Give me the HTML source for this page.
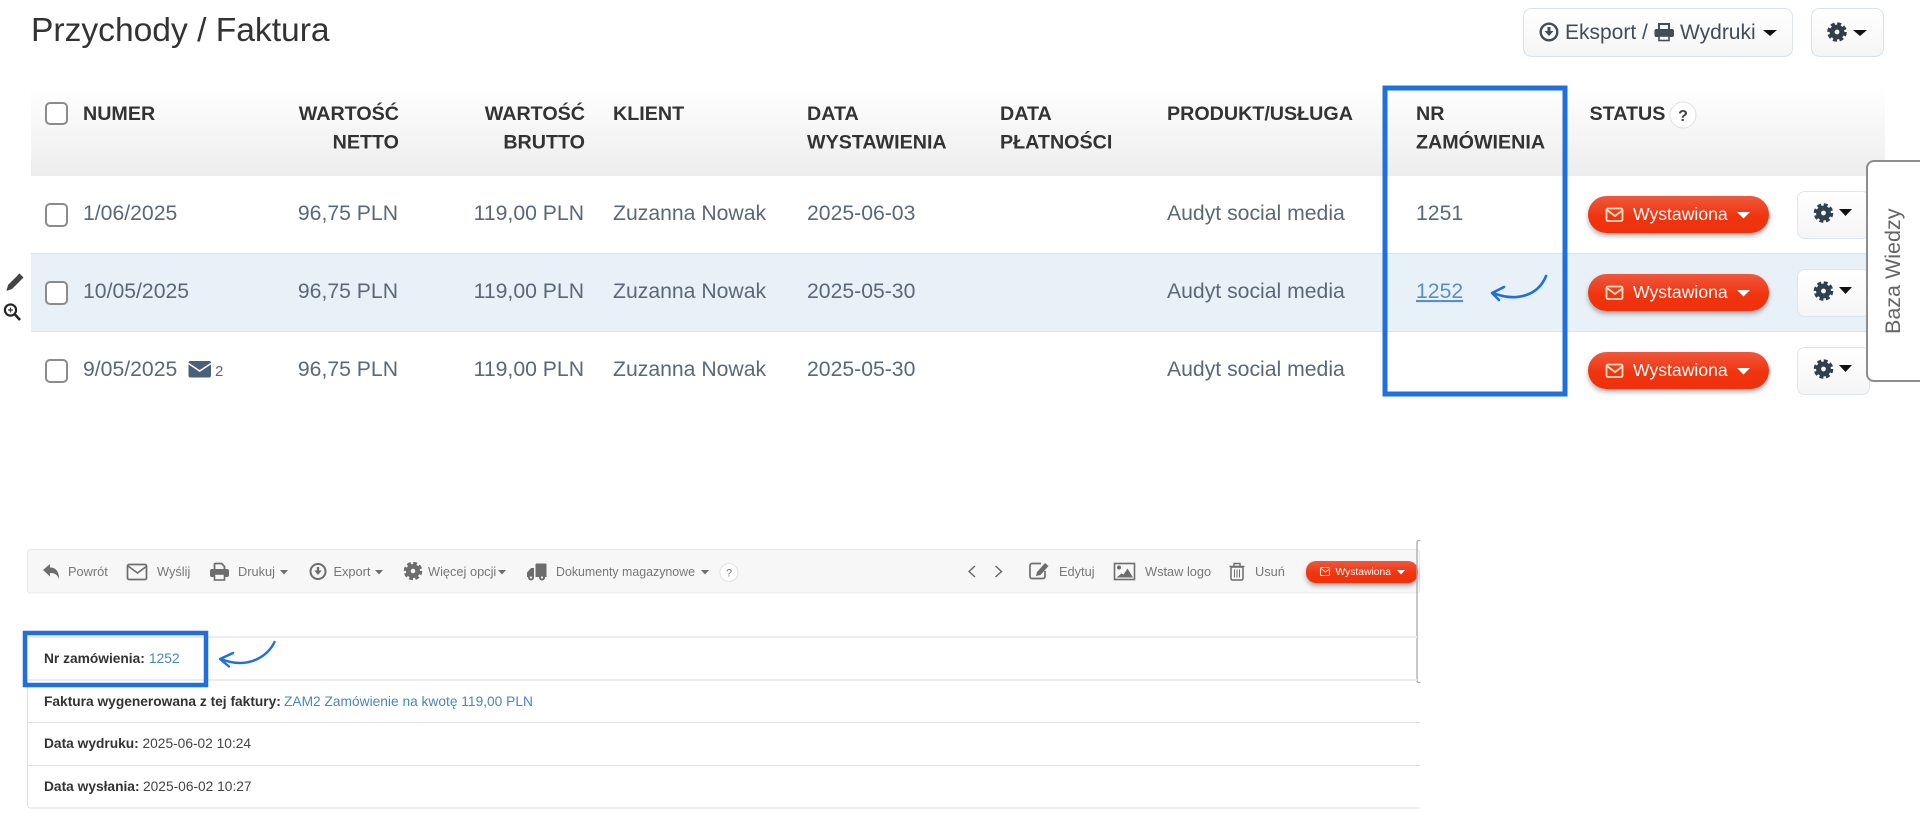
<!DOCTYPE html>
<html lang="pl"><head><meta charset="utf-8"><title>Przychody / Faktura</title>
<style>
html,body{margin:0;padding:0;background:#fff;width:1920px;height:816px;overflow:hidden}
svg{display:block;filter:blur(.35px)}
text{font-family:"Liberation Sans",Arial,sans-serif;white-space:pre}
.h{font-size:19.7px;font-weight:700;fill:#333}
.c{font-size:21.2px;fill:#5b6878}
.r{text-anchor:end}
.tb{font-size:12.800px;fill:#777}
.b{font-size:13.75px;font-weight:700;fill:#333}
.n{font-size:13.75px;fill:#444}
.l{font-size:13.75px;fill:#4a86c0}
</style></head><body>
<svg width="1920" height="816" viewBox="0 0 1920 816" xmlns="http://www.w3.org/2000/svg">
<defs>
<linearGradient id="hg" x1="0" y1="0" x2="0" y2="1"><stop offset="0" stop-color="#fff"/><stop offset="1" stop-color="#ededed"/></linearGradient>
<linearGradient id="bg" x1="0" y1="0" x2="0" y2="1"><stop offset="0" stop-color="#fff"/><stop offset="1" stop-color="#f5f5f5"/></linearGradient>
<linearGradient id="rg" x1="0" y1="0" x2="0" y2="1"><stop offset="0" stop-color="#f0583c"/><stop offset=".55" stop-color="#f1340f"/><stop offset="1" stop-color="#ee300e"/></linearGradient>
<filter id="sh" x="-10%" y="-20%" width="120%" height="160%"><feDropShadow dx="0" dy="3" stdDeviation="2.5" flood-color="#000" flood-opacity=".3"/></filter>
<g id="gear"><circle r="8.200" fill="none" stroke="currentColor" stroke-width="3.200" stroke-dasharray="3.900 2.540"/><circle r="4.900" fill="none" stroke="currentColor" stroke-width="5"/></g>
<g id="pill">
<rect x="0" y="0" width="181" height="37" rx="18.5" fill="url(#rg)" filter="url(#sh)"/>
<rect x="18.5" y="12.5" width="16" height="12.5" rx="1.5" fill="none" stroke="#ffdcc0" stroke-width="1.8"/>
<path d="M19 14l8 6 8-6" fill="none" stroke="#ffdcc0" stroke-width="1.8"/>
<text x="45" y="24" font-size="17.6" fill="#fff">Wystawiona</text>
<path d="M149 16h13l-6.500 6.500z" fill="#fff"/>
</g>
<g id="gbtn">
<rect x=".5" y=".5" width="72" height="47" rx="7" fill="url(#bg)" stroke="#dde5ee"/>
<use href="#gear" x="26.500" y="22" color="#2f4050"/>
<path d="M42 18h13l-6.500 7z" fill="#111"/>
</g>
</defs>

<rect width="1920" height="816" fill="#fff"/>

<text x="31" y="41" font-size="33.600" fill="#333">Przychody / Faktura</text>

<!-- top buttons -->
<rect x="1523.500" y="8.500" width="269" height="48" rx="8" fill="url(#bg)" stroke="#d9e3ed"/>
<circle cx="1549" cy="32" r="8.300" fill="none" stroke="#444c55" stroke-width="2.400"/>
<path d="M1549 27v5" stroke="#444c55" stroke-width="3" fill="none"/>
<path d="M1544.500 31h9l-4.500 5z" fill="#444c55"/>
<text x="1565" y="39" font-size="21" fill="#444c55">Eksport /</text>
<path d="M1659 31v-7h10v7" fill="none" stroke="#444c55" stroke-width="2"/>
<rect x="1654.500" y="29" width="19.500" height="8" rx="2" fill="#444c55"/>
<rect x="1659" y="36" width="10" height="4.500" fill="#fff" stroke="#444c55" stroke-width="1.600"/>
<text x="1680" y="39" font-size="21" fill="#444c55">Wydruki</text>
<path d="M1763 30h14l-7 6z" fill="#111"/>
<rect x="1811.500" y="8.500" width="72" height="48" rx="8" fill="url(#bg)" stroke="#d9e3ed"/>
<use href="#gear" x="1837" y="32" color="#333c48"/>
<path d="M1853 30h14l-7 6z" fill="#111"/>

<!-- table -->
<rect x="31" y="85" width="1854" height="91" fill="url(#hg)"/>
<rect x="31" y="253" width="1854" height="78" fill="#e9f1f8"/>
<rect x="31" y="253" width="1854" height="1" fill="#dbe3ea"/>
<rect x="31" y="331" width="1854" height="1" fill="#dbe3ea"/>

<g fill="#fff" stroke="#8b8b8b" stroke-width="2">
<rect x="46" y="103" width="21" height="21" rx="4"/>
<rect x="46" y="204" width="21" height="22" rx="4"/>
<rect x="46" y="282" width="21" height="22" rx="4"/>
<rect x="46" y="360" width="21" height="22" rx="4"/>
</g>

<text class="h" x="83" y="120">NUMER</text>
<text class="h r" x="399" y="120">WARTOŚĆ</text><text class="h r" x="399" y="148.500">NETTO</text>
<text class="h r" x="585" y="120">WARTOŚĆ</text><text class="h r" x="585" y="148.500">BRUTTO</text>
<text class="h" x="613" y="120">KLIENT</text>
<text class="h" x="807" y="120">DATA</text><text class="h" x="807" y="148.500">WYSTAWIENIA</text>
<text class="h" x="1000" y="120">DATA</text><text class="h" x="1000" y="148.500">PŁATNOŚCI</text>
<text class="h" x="1167" y="120">PRODUKT/USŁUGA</text>
<text class="h" x="1416" y="120">NR</text><text class="h" x="1416" y="148.500">ZAMÓWIENIA</text>
<text class="h" x="1589.500" y="120">STATUS</text>
<circle cx="1683" cy="115" r="13" fill="#fff" stroke="#e2e2e2"/>
<text x="1683" y="121" font-size="16" font-weight="700" fill="#444" text-anchor="middle">?</text>

<!-- rows -->
<text class="c" x="83" y="220">1/06/2025</text>
<text class="c r" x="398" y="220">96,75 PLN</text>
<text class="c r" x="584" y="220">119,00 PLN</text>
<text class="c" x="613" y="220">Zuzanna Nowak</text>
<text class="c" x="807" y="220">2025-06-03</text>
<text class="c" x="1167" y="220">Audyt social media</text>
<text class="c" x="1416" y="220">1251</text>

<text class="c" x="83" y="298">10/05/2025</text>
<text class="c r" x="398" y="298">96,75 PLN</text>
<text class="c r" x="584" y="298">119,00 PLN</text>
<text class="c" x="613" y="298">Zuzanna Nowak</text>
<text class="c" x="807" y="298">2025-05-30</text>
<text class="c" x="1167" y="298">Audyt social media</text>
<text x="1416" y="298" font-size="21.2" fill="#5a8fc4" text-decoration="underline">1252</text>

<text class="c" x="83" y="376">9/05/2025</text>
<text class="c r" x="398" y="376">96,75 PLN</text>
<text class="c r" x="584" y="376">119,00 PLN</text>
<text class="c" x="613" y="376">Zuzanna Nowak</text>
<text class="c" x="807" y="376">2025-05-30</text>
<text class="c" x="1167" y="376">Audyt social media</text>
<rect x="188.500" y="361" width="22.500" height="16.500" rx="2" fill="#4a5f78"/>
<path d="M188.500 363.500l11.200 7.500 11.300-7.500" fill="none" stroke="#fff" stroke-width="1.600"/>
<text x="215" y="376" font-size="15" fill="#666">2</text>

<!-- side icons -->
<path d="M19.500 273.500l4 4-11.500 11.500-5.500 2 1.500-6z" fill="#444"/>
<circle cx="10.500" cy="310" r="5.600" fill="#fff" stroke="#222" stroke-width="2.100"/>
<path d="M8 310h5M10.500 307.500v5" stroke="#333" stroke-width="1.200"/>
<path d="M15 314.500l5 5.500" stroke="#222" stroke-width="2.600"/>

<!-- pills -->
<use href="#pill" x="1588" y="196"/>
<use href="#pill" x="1588" y="274"/>
<use href="#pill" x="1588" y="352"/>

<!-- gear buttons -->
<use href="#gbtn" x="1797" y="191"/>
<use href="#gbtn" x="1797" y="269"/>
<use href="#gbtn" x="1797" y="347"/>

<!-- Baza Wiedzy -->
<path d="M1925 161h-51a7 7 0 0 0-7 7v206a7 7 0 0 0 7 7h51z" fill="#fff" stroke="#8d8d8d" stroke-width="2"/>
<text transform="translate(1900 334) rotate(-90)" font-size="21.500" fill="#666">Baza Wiedzy</text>

<!-- blue frame 1 -->
<rect x="1385" y="88" width="180" height="306" fill="none" stroke="#1f6fe0" stroke-width="5"/>
<path d="M1546 276C1538 296 1516 302 1493 293" fill="none" stroke="#1f6fe0" stroke-width="2.600" stroke-linecap="round"/>
<path d="M1504 287L1492 293L1499 300" fill="none" stroke="#1f6fe0" stroke-width="2.600" stroke-linecap="round" stroke-linejoin="round"/>

<!-- bottom: toolbar -->
<rect x="27.500" y="549.500" width="1392" height="43.500" rx="3" fill="#f7f7f7" stroke="#e8e8e8"/>
<g fill="#6d6d6d" stroke="none">
<path d="M43 570l7-6v3.500c6 0 9 4 9 11.500-2-4.500-4-6-9-6v3.500z"/>
<path d="M214.500 570v-5.500a1 1 0 0 1 1-1h6l3 3v3.500" fill="none" stroke="#6d6d6d" stroke-width="1.800"/>
<rect x="210" y="569" width="19" height="8" rx="2"/>
<rect x="214.500" y="574" width="10" height="6" fill="#f7f7f7" stroke="#6d6d6d" stroke-width="1.600"/>
<path d="M280 570h8l-4 4.500zM375 570h8l-4 4.500zM498 570h8l-4 4.500zM701 570h8l-4 4.500z"/>
<circle cx="318" cy="571.500" r="7.500" fill="none" stroke="#6d6d6d" stroke-width="2"/>
<path d="M316.800 567h2.400v3.500h2.500l-3.700 4.500-3.700-4.500h2.500z"/>
<path d="M535.500 564.500a1 1 0 0 1 1-1h9a1 1 0 0 1 1 1V577h-11z"/>
<path d="M534 568h-3l-4 4.500V577h7z"/>
<circle cx="531" cy="577.500" r="3"/><circle cx="542" cy="577.500" r="3"/>
</g>
<circle cx="531" cy="577.500" r="1.100" fill="#f7f7f7"/><circle cx="542" cy="577.500" r="1.100" fill="#f7f7f7"/>
<rect x="127.500" y="564.500" width="19" height="15" rx="1.500" fill="none" stroke="#6d6d6d" stroke-width="1.700"/>
<path d="M128 566l9.500 7 9.500-7" fill="none" stroke="#6d6d6d" stroke-width="1.700"/>
<use href="#gear" transform="translate(413 571) scale(.95)" color="#6d6d6d"/>
<text class="tb" x="68" y="576">Powrót</text>
<text class="tb" x="157" y="576">Wyślij</text>
<text class="tb" x="238" y="576">Drukuj</text>
<text class="tb" x="333.500" y="576">Export</text>
<text class="tb" x="428" y="576">Więcej opcji</text>
<text class="tb" x="556" y="576" textLength="139" lengthAdjust="spacingAndGlyphs">Dokumenty magazynowe</text>
<circle cx="729" cy="572.500" r="9" fill="#fff" stroke="#e2e2e2"/>
<text x="729" y="576.500" font-size="11" fill="#777" text-anchor="middle">?</text>

<path d="M975 566l-6 5.500 6 5.500M995.500 566l6 5.500-6 5.500" fill="none" stroke="#666" stroke-width="1.400"/>
<path d="M1045 571v5.500a2 2 0 0 1-2 2h-11a2 2 0 0 1-2-2v-11a2 2 0 0 1 2-2h9" fill="none" stroke="#6d6d6d" stroke-width="1.700"/>
<path d="M1037 572l8-9 3.500 3-8 9-4.500 1z" fill="#6d6d6d"/>
<text class="tb" x="1059" y="576">Edytuj</text>
<rect x="1114.500" y="563.500" width="20" height="16" fill="none" stroke="#6d6d6d" stroke-width="1.600"/>
<circle cx="1119" cy="567.500" r="2" fill="#6d6d6d"/>
<path d="M1116.500 577.500l5-4 2 1 4-6 5.500 9z" fill="#6d6d6d"/>
<text class="tb" x="1145" y="576">Wstaw logo</text>
<path d="M1229.500 566.500h15M1234 566v-2.500h6v2.500" fill="none" stroke="#6d6d6d" stroke-width="1.400"/>
<rect x="1231" y="567" width="12" height="13" rx="1.500" fill="none" stroke="#6d6d6d" stroke-width="1.500"/>
<path d="M1234.500 569.500v8M1237 569.500v8M1239.500 569.500v8" stroke="#6d6d6d" stroke-width="1"/>
<text class="tb" x="1255" y="576">Usuń</text>

<rect x="1306" y="561" width="112" height="22" rx="10" fill="url(#rg)" filter="url(#sh)"/>
<rect x="1320.500" y="567.500" width="9" height="8" rx="1" fill="none" stroke="#ffdcc0" stroke-width="1.100"/>
<path d="M1321 568.500l4.500 3.500 4.500-3.500" fill="none" stroke="#ffdcc0" stroke-width="1.100"/>
<text x="1335.500" y="575" font-size="10.300" fill="#fff">Wystawiona</text>
<path d="M1397 570h8l-4 4.500z" fill="#fff"/>

<!-- bottom: detail rows -->
<path d="M1420.500 540.500h-1.500a2 2 0 0 0-2 2v138a2 2 0 0 0 2 2h1.500" fill="none" stroke="#a9a9a9" stroke-width="1.300"/>
<rect x="27" y="636" width="1390" height="2" fill="#ececec"/>
<rect x="27" y="679" width="1390" height="2" fill="#ececec"/>
<rect x="27" y="722" width="1393" height="1" fill="#e1e1e1"/>
<rect x="27" y="765" width="1393" height="1" fill="#e1e1e1"/>
<path d="M27.500 681v124a3 3 0 0 0 3 3H1420" fill="none" stroke="#e1e1e1"/>

<text class="b" x="44" y="663">Nr zamówienia:</text><text class="l" x="149" y="663">1252</text>
<text class="b" x="44" y="706">Faktura wygenerowana z tej faktury:</text><text class="l" x="284" y="706">ZAM2 Zamówienie na kwotę 119,00 PLN</text>
<text class="b" x="44" y="748">Data wydruku:</text><text class="n" x="142.500" y="748">2025-06-02 10:24</text>
<text class="b" x="44" y="791">Data wysłania:</text><text class="n" x="143" y="791">2025-06-02 10:27</text>

<rect x="25" y="633" width="181" height="52" fill="none" stroke="#1f6fe0" stroke-width="4.500"/>
<path d="M274.500 642C268 656 248 670 221 659" fill="none" stroke="#1f6fe0" stroke-width="2.400" stroke-linecap="round"/>
<path d="M233 653L220 659L229 666.500" fill="none" stroke="#1f6fe0" stroke-width="2.400" stroke-linecap="round" stroke-linejoin="round"/>
</svg>
</body></html>
